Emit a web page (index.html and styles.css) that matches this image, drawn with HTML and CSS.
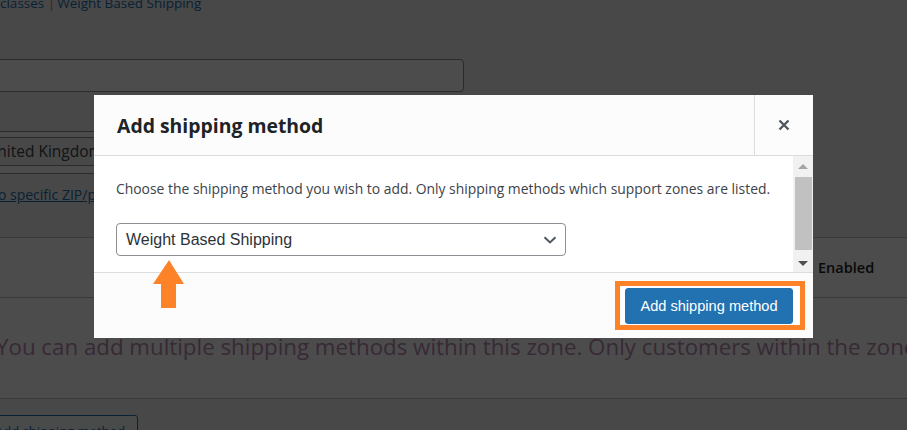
FILE: index.html
```html
<!DOCTYPE html>
<html lang="en">
<head>
<meta charset="utf-8">
<title>Add shipping method</title>
<link rel="stylesheet" href="styles.css">
</head>
<body>
<div class="page">
  <div class="crumbs"><a class="crumb" href="#">classes</a> <span class="sep">|</span><a class="crumb" href="#">Weight Based Shipping</a></div>
  <div class="field zone-name"></div>
  <div class="field regions"><span class="token">United Kingdom (UK)</span></div>
  <a class="postcode-link" href="#">Limit to specific ZIP/postcodes</a>
  <div class="methods">
    <div class="row head"><span class="col-enabled">Enabled</span></div>
    <div class="row blank"><p class="blank-text">You can add multiple shipping methods within this zone. Only customers within the zone will see them.</p></div>
    <div class="row actions"><button class="btn-outline">Add shipping method</button></div>
  </div>
</div>

<div class="backdrop"></div>

<div class="modal">
  <header class="modal-head">
    <h1 class="modal-title">Add shipping method</h1>
    <button class="modal-close" aria-label="Close">
      <svg width="12" height="12" viewBox="0 0 12 12"><path d="M1.5 1.5 L10.5 10.5 M10.5 1.5 L1.5 10.5" stroke="#50575e" stroke-width="2.4" stroke-linecap="butt"/></svg>
    </button>
  </header>
  <div class="modal-body">
    <div class="modal-content">
      <p class="modal-desc">Choose the shipping method you wish to add. Only shipping methods which support zones are listed.</p>
      <div class="select">
        <span class="select-value">Weight Based Shipping</span>
        <svg class="select-chev" width="14" height="8" viewBox="0 0 14 8"><path d="M1.5 1.2 L7 6.4 L12.5 1.2" fill="none" stroke="#50575e" stroke-width="2"/></svg>
      </div>
    </div>
    <div class="scrollbar">
      <span class="sb-up"></span>
      <span class="sb-thumb"></span>
      <span class="sb-down"></span>
    </div>
  </div>
  <footer class="modal-foot">
    <span class="highlight"><button class="btn-primary">Add shipping method</button></span>
  </footer>
</div>

<svg class="pointer" width="40" height="52" viewBox="0 0 40 52">
  <polygon points="19,2 3,26 11,26 11,50 26,50 26,26 34,26" fill="#fe8227"/>
</svg>
</body>
</html>
```

FILE: styles.css
```css
* { box-sizing: border-box; }
html, body { margin: 0; padding: 0; }
body {
  width: 907px;
  height: 430px;
  overflow: hidden;
  background: #f0f0f1;
  font-family: "Open Sans", "Noto Sans", sans-serif;
  color: #3c434a;
  position: relative;
}

/* ---------- background page ---------- */
.page { display: flex; flex-direction: column; align-items: flex-start; }

.crumbs {
  margin-top: -7px;
  height: 20px;
  line-height: 20px;
  font-size: 13.5px;
  white-space: nowrap;
}
.crumb { color: #2271b1; text-decoration: none; }
.sep { color: #c9852c; margin: 0 2px 0 0; }

.field {
  background: #fff;
  border: 1px solid #8c8f94;
  border-radius: 4px;
}
.zone-name {
  margin-top: 46px;
  margin-left: -30px;
  width: 494px;
  height: 33px;
}
.regions {
  margin-top: 39px;
  margin-left: -30px;
  width: 700px;
  height: 43px;
  padding: 5px;
}
.token {
  display: inline-block;
  height: 29px;
  line-height: 27px;
  padding: 0 10px 0 9px;
  border: 1px solid #8c8f94;
  border-radius: 3px;
  background: #f0f0f1;
  font-size: 15.5px;
  color: #3c434a;
  white-space: nowrap;
}
.postcode-link {
  margin-top: 11px;
  margin-left: -43px;
  font-size: 14px;
  line-height: 20px;
  color: #2271b1;
  text-decoration: underline;
  white-space: nowrap;
}

.methods {
  margin-top: 32px;
  width: 907px;
  background: #fff;
}
.row { border-top: 1px solid #c3c4c7; width: 907px; }
.head { height: 60px; display: flex; align-items: center; }
.col-enabled {
  margin-left: 818px;
  font-weight: 600;
  font-size: 14.5px;
  color: #1d2327;
}
.blank {
  height: 101px;
  padding-top: 33px;
  background: linear-gradient(118deg, transparent 0, transparent 88%, rgba(255,255,255,0.035) 88%, rgba(0,0,0,0.0) 96%), #fff;
}
.blank-text {
  margin: 0 0 0 -4px;
  font-size: 22.3px;
  line-height: 32px;
  color: #bb8ab3;
  white-space: nowrap;
}
.actions { height: 40px; padding-top: 16px; background: #f0f0f1; }
.btn-outline {
  margin-left: -18px;
  height: 32px;
  padding: 0 12px;
  border: 1px solid #2271b1;
  border-radius: 3px;
  background: #f6f7f7;
  color: #2271b1;
  font-family: "Open Sans", sans-serif;
  font-size: 13px;
  white-space: nowrap;
}

.backdrop {
  position: absolute;
  inset: 0;
  background: rgba(0, 0, 0, 0.7);
}

/* ---------- modal ---------- */
.modal {
  position: absolute;
  left: 94px;
  top: 95px;
  width: 719px;
  height: 243px;
  background: #fff;
  display: flex;
  flex-direction: column;
}
.modal-head {
  height: 61px;
  flex: none;
  display: flex;
  align-items: stretch;
  background: #fcfcfc;
  border-bottom: 1px solid #dcdcde;
}
.modal-title {
  flex: 1;
  margin: 0;
  padding: 0 0 0 23px;
  display: flex;
  align-items: center;
  font-size: 19.4px;
  font-weight: 700;
  color: #1d2327;
}
.modal-close {
  width: 59px;
  padding: 0;
  border: 0;
  border-left: 1px solid #dcdcde;
  background: transparent;
  display: flex;
  align-items: center;
  justify-content: center;
}
.modal-body {
  height: 116px;
  flex: none;
  display: flex;
  background: #fff;
}
.modal-content {
  flex: 1;
  padding: 22px 0 0 22px;
}
.modal-desc {
  margin: 0;
  font-size: 13.9px;
  line-height: 21px;
  color: #3c434a;
  white-space: nowrap;
}
.select {
  margin-top: 24px;
  width: 450px;
  height: 33px;
  border: 1px solid #8c8f94;
  border-radius: 4px;
  display: flex;
  align-items: center;
  justify-content: space-between;
  padding: 0 8px 0 9px;
  background: #fff;
}
.select-value {
  font-family: "Liberation Sans", Arial, sans-serif;
  font-size: 16px;
  color: #2c3338;
}
.scrollbar {
  width: 20px;
  flex: none;
  background: #f1f1f1;
  display: flex;
  flex-direction: column;
  align-items: center;
}
.sb-up {
  margin-top: 8px;
  width: 0; height: 0;
  border-left: 5px solid transparent;
  border-right: 5px solid transparent;
  border-bottom: 5px solid #a3a3a3;
}
.sb-thumb {
  margin-top: 8px;
  width: 17px;
  height: 73px;
  background: #c1c1c1;
}
.sb-down {
  margin-top: 11px;
  width: 0; height: 0;
  border-left: 5px solid transparent;
  border-right: 5px solid transparent;
  border-top: 5px solid #505050;
}
.modal-foot {
  flex: 1;
  display: flex;
  justify-content: flex-end;
  align-items: center;
  padding-right: 8px;
  background: #fcfcfc;
  border-top: 1px solid #dcdcde;
}
.highlight {
  display: inline-flex;
  border: 5px solid #fe8227;
  padding: 2px 7px 1px 5px;
  background: #fff;
}
.btn-primary {
  width: 168px;
  height: 36px;
  padding: 0;
  border: 1px solid #2271b1;
  border-radius: 3px;
  background: #2271b1;
  color: #fff;
  font-family: "Liberation Sans", Arial, sans-serif;
  font-size: 14.6px;
}

.pointer {
  position: absolute;
  left: 150px;
  top: 258px;
}
```
